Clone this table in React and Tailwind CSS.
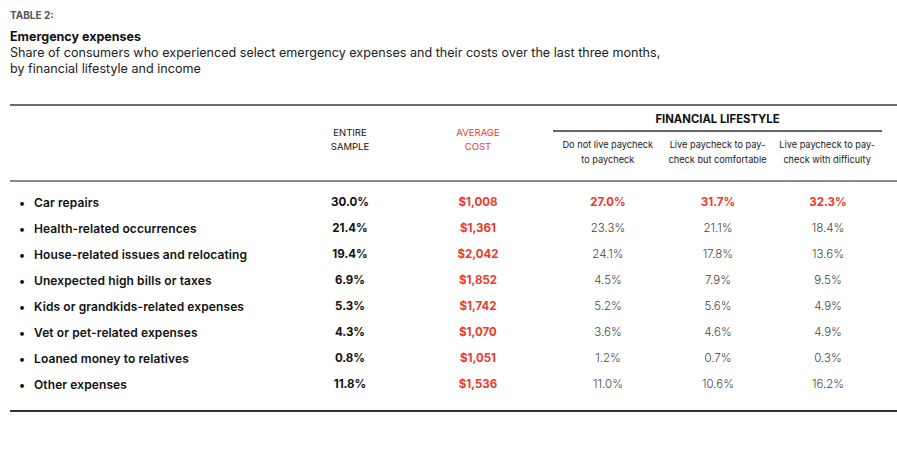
const rows = [
    { label: "Car repairs", total: "30.0%", cost: "$1,008", a: "27.0%", b: "31.7%", c: "32.3%", hi: true },
    { label: "Health-related occurrences", total: "21.4%", cost: "$1,361", a: "23.3%", b: "21.1%", c: "18.4%" },
    { label: "House-related issues and relocating", total: "19.4%", cost: "$2,042", a: "24.1%", b: "17.8%", c: "13.6%" },
    { label: "Unexpected high bills or taxes", total: "6.9%", cost: "$1,852", a: "4.5%", b: "7.9%", c: "9.5%" },
    { label: "Kids or grandkids-related expenses", total: "5.3%", cost: "$1,742", a: "5.2%", b: "5.6%", c: "4.9%" },
    { label: "Vet or pet-related expenses", total: "4.3%", cost: "$1,070", a: "3.6%", b: "4.6%", c: "4.9%" },
    { label: "Loaned money to relatives", total: "0.8%", cost: "$1,051", a: "1.2%", b: "0.7%", c: "0.3%" },
    { label: "Other expenses", total: "11.8%", cost: "$1,536", a: "11.0%", b: "10.6%", c: "16.2%" },
];

const lifestyle = [
    ["Do not live paycheck", "to paycheck"],
    ["Live paycheck to pay-", "check but comfortable"],
    ["Live paycheck to pay-", "check with difficulty"],
];

const App = () => {
    return (
        <div className="w-[897px] h-[459px] bg-white pl-[10px] pt-[9px] font-['Inter','Liberation_Sans',sans-serif] text-[#111]">
            <p className="text-[10px] leading-[12px] font-bold text-[#555]">TABLE 2:</p>
            <h1 className="mt-[8px] text-[12.5px] leading-[16px] font-bold">Emergency expenses</h1>
            <p className="text-[12.6px] leading-[16px] text-[#222]">
                Share of consumers who experienced select emergency expenses and their costs over the last three months,
                <br />
                by financial lifestyle and income
            </p>

            <div className="mt-[27px] border-t-2 border-[#6b6b6b]">
                {/* header */}
                <div className="flex border-b-2 border-[#8a8a8a] pb-[13px]">
                    <div className="w-[280px]" />
                    <div className="w-[120px] pt-[20px] text-center text-[9.5px] leading-[14px] uppercase">
                        Entire<br />Sample
                    </div>
                    <div className="w-[143px] pr-[7px] pt-[20px] text-center text-[9.5px] leading-[14px] uppercase text-[#f0392b]">
                        Average<br />Cost
                    </div>
                    <div className="w-[329px] pt-[6px]">
                        <div className="border-b-2 border-[#666] pb-[4px] text-center text-[11.3px] leading-[14px] font-bold">
                            FINANCIAL LIFESTYLE
                        </div>
                        <div className="mt-[5px] flex">
                            {lifestyle.map(([l1, l2], i) => (
                                <div key={i} className="w-[110px] text-center text-[9.2px] leading-[15px] text-[#222]">
                                    {l1}<br />{l2}
                                </div>
                            ))}
                        </div>
                    </div>
                </div>

                {/* body */}
                <div className="pt-[8px] pb-[12px] border-b-2 border-[#333]">
                    {rows.map((r) => (
                        <div key={r.label} className="flex h-[26px] items-center text-[11.5px]">
                            <div className="w-[280px] flex items-center font-semibold text-[12px] tracking-[0.1px]">
                                <span className="w-[24px] pl-[9px]">•</span>
                                {r.label}
                            </div>
                            <div className="w-[120px] text-center font-bold">{r.total}</div>
                            <div className="w-[143px] pr-[7px] text-center font-bold text-[#f0392b]">{r.cost}</div>
                            {[r.a, r.b, r.c].map((v, i) => (
                                <div
                                    key={i}
                                    className={
                                        r.hi
                                            ? "w-[110px] text-center font-bold text-[#f0392b]"
                                            : "w-[110px] text-center font-light text-[#444]"
                                    }
                                >
                                    {v}
                                </div>
                            ))}
                        </div>
                    ))}
                </div>
            </div>
        </div>
    );
};

export default App;
